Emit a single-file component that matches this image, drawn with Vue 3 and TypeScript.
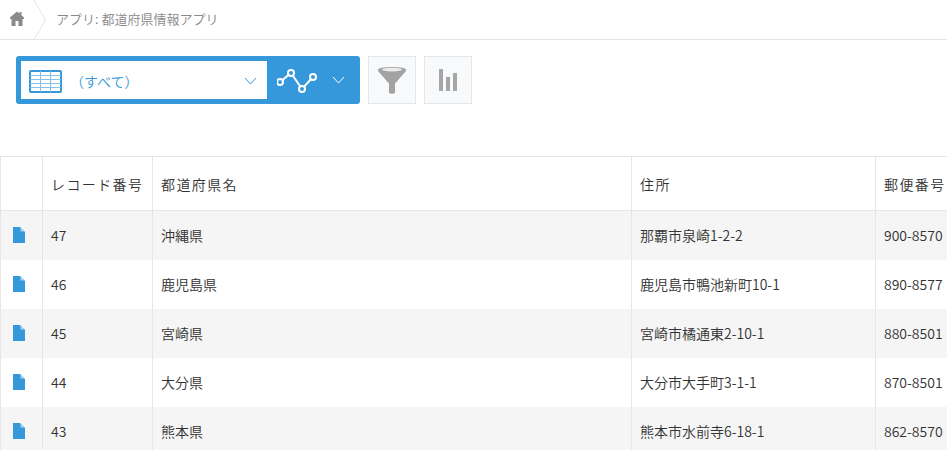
<script setup lang="ts">
interface Row { id: number; name: string; addr: string; zip: string }
const rows: Row[] = [
  { id: 47, name: '沖縄県', addr: '那覇市泉崎1-2-2', zip: '900-8570' },
  { id: 46, name: '鹿児島県', addr: '鹿児島市鴨池新町10-1', zip: '890-8577' },
  { id: 45, name: '宮崎県', addr: '宮崎市橘通東2-10-1', zip: '880-8501' },
  { id: 44, name: '大分県', addr: '大分市大手町3-1-1', zip: '870-8501' },
  { id: 43, name: '熊本県', addr: '熊本市水前寺6-18-1', zip: '862-8570' },
]
</script>

<template>
  <div class="page">
    <nav class="crumbs">
      <div class="home">
        <svg width="14" height="15" viewBox="0 0 14 15">
          <path d="M7 0.5 L9.5 2.6 L9.5 1 L11.5 1 L11.5 4.3 L14 6.5 L14 8 L12.5 8 L12.5 15 L8.5 15 L8.5 10 L5.5 10 L5.5 15 L1.5 15 L1.5 8 L0 8 L0 6.5 Z" fill="#8a8a8a" />
        </svg>
      </div>
      <svg class="chev" width="14" height="40" viewBox="0 0 14 40">
        <path d="M1 0 L12.5 20 L1 39.5" fill="none" stroke="#e3e5e7" stroke-width="1" />
      </svg>
      <span class="crumb-text">アプリ: 都道府県情報アプリ</span>
    </nav>

    <div class="toolbar">
      <div class="selector">
        <div class="view-select">
          <svg class="grid-icon" width="33" height="23" viewBox="0 0 33 23">
            <rect x="1" y="1" width="31" height="21" rx="1" fill="#fff" stroke="#3498db" stroke-width="2" />
            <path d="M1 5.5 H32 M1 9.5 H32 M1 13.5 H32 M1 17.5 H32 M11.5 1 V22 M21.5 1 V22" stroke="#85c1e9" stroke-width="1" fill="none" />
          </svg>
          <span class="view-name">（すべて）</span>
          <svg class="arrow" width="14" height="8" viewBox="0 0 14 8">
            <path d="M1 1 L6.5 7 L12 1" fill="none" stroke="#3498db" stroke-width="1" />
          </svg>
        </div>
        <div class="graph-select">
          <svg width="40" height="26" viewBox="0 0 40 26">
            <path d="M3 15 L14 6 L25 22 L36 10" fill="none" stroke="#fff" stroke-width="2" />
            <circle cx="3" cy="15" r="3" fill="#3498db" stroke="#fff" stroke-width="2" />
            <circle cx="14" cy="6" r="3" fill="#3498db" stroke="#fff" stroke-width="2" />
            <circle cx="25" cy="22" r="3" fill="#3498db" stroke="#fff" stroke-width="2" />
            <circle cx="36" cy="10" r="3" fill="#3498db" stroke="#fff" stroke-width="2" />
          </svg>
          <svg class="arrow-w" width="14" height="8" viewBox="0 0 14 8">
            <path d="M1 1 L6.5 7 L12 1" fill="none" stroke="#fff" stroke-width="1" />
          </svg>
        </div>
      </div>
      <button class="tool" type="button" aria-label="絞り込む">
        <svg width="28" height="28" viewBox="0 0 28 28">
          <path d="M0 3.5 C0 0 28 0 28 3.5 C28 5 27.5 5.5 27 6.2 L17 17.5 L17 27 Q14 28.5 11 27 L11 17.5 L1 6.2 C0.5 5.5 0 5 0 3.5 Z" fill="#a3a3a3" />
          <ellipse cx="14" cy="3.6" rx="10" ry="1.8" fill="#ededed" />
        </svg>
      </button>
      <button class="tool" type="button" aria-label="グラフ">
        <svg width="20" height="24" viewBox="0 0 20 24">
          <rect x="1" y="1" width="4" height="22" fill="#a6a6a6" />
          <rect x="8" y="9" width="4" height="14" fill="#a6a6a6" />
          <rect x="15" y="5" width="4" height="18" fill="#a6a6a6" />
        </svg>
      </button>
    </div>

    <div class="table-wrap">
      <table>
        <colgroup>
          <col class="c0" /><col class="c1" /><col class="c2" /><col class="c3" /><col class="c4" />
        </colgroup>
        <thead>
          <tr>
            <th></th>
            <th>レコード番号</th>
            <th>都道府県名</th>
            <th>住所</th>
            <th>郵便番号</th>
          </tr>
        </thead>
        <tbody>
          <tr v-for="r in rows" :key="r.id">
            <td class="icon-cell">
              <svg width="12" height="16" viewBox="0 0 12 16">
                <path d="M0 0 H7 L12 5 V16 H0 Z" fill="#3498db" />
                <path d="M7.5 0.5 L11.5 4.5 H7.5 Z" fill="#a9d3f0" />
              </svg>
            </td>
            <td>{{ r.id }}</td>
            <td>{{ r.name }}</td>
            <td>{{ r.addr }}</td>
            <td>{{ r.zip }}</td>
          </tr>
        </tbody>
      </table>
    </div>
  </div>
</template>

<style>
html, body { margin: 0; background: #fff; overflow: hidden; }
</style>

<style scoped>
.page {
  width: 947px;
  height: 450px;
  overflow: hidden;
  font-family: "Noto Sans CJK JP", "Noto Sans", sans-serif;
  font-size: 14px;
  font-weight: 350;
  color: #333;
}
.crumbs {
  display: flex;
  align-items: center;
  height: 39px;
  border-bottom: 1px solid #e3e5e7;
  overflow: hidden;
}
.home {
  width: 33px;
  display: flex;
  justify-content: center;
  padding-bottom: 2px;
  box-sizing: border-box;
}
.chev { flex: none; }
.crumb-text {
  margin-left: 9px;
  font-size: 13px;
  color: #888;
  padding-bottom: 3px;
}
.toolbar {
  display: flex;
  align-items: flex-start;
  gap: 8px;
  padding: 16px 16px 0;
  height: 100px;
}
.selector {
  display: flex;
  align-items: stretch;
  width: 344px;
  height: 48px;
  box-sizing: border-box;
  padding: 5px 0 5px 5px;
  background: #3498db;
  border-radius: 3px;
}
.view-select {
  width: 246px;
  background: #fff;
  display: flex;
  align-items: center;
  padding: 0 9px 0 8px;
  box-sizing: border-box;
  flex: none;
}
.grid-icon { flex: none; margin-top: 3px; }
.view-name {
  flex: 1;
  margin: 2px 0 0 8px;
  color: #3498db;
  font-size: 14px;
}
.arrow { flex: none; margin-top: 2px; }
.graph-select {
  flex: 1;
  display: flex;
  align-items: center;
  padding-left: 10px;
  gap: 15px;
}
.tool {
  width: 48px;
  height: 48px;
  padding: 0;
  display: flex;
  align-items: center;
  justify-content: center;
  background: #f7f9fa;
  border: 1px solid #e3e7e8;
  box-sizing: border-box;
}
.table-wrap {
  overflow: hidden;
  width: 947px;
}
table {
  table-layout: fixed;
  width: 1100px;
  border-collapse: collapse;
}
.c0 { width: 42px; }
.c1 { width: 110px; }
.c2 { width: 479px; }
.c3 { width: 244px; }
.c4 { width: 225px; }
th {
  height: 54px;
  padding: 0 8px;
  box-sizing: border-box;
  border: 1px solid #e3e7e8;
  text-align: left;
  font-weight: 350;
  letter-spacing: 1.4px;
  color: #333;
  background: #fff;
}
td {
  height: 49px;
  padding: 0 8px;
  box-sizing: border-box;
  border-left: 1px solid #e3e7e8;
  border-right: 1px solid #e3e7e8;
}
tbody tr:nth-child(odd) td { background: #f5f5f5; }
.icon-cell { padding: 0 0 0 12px; }
.icon-cell svg { display: block; }
</style>
